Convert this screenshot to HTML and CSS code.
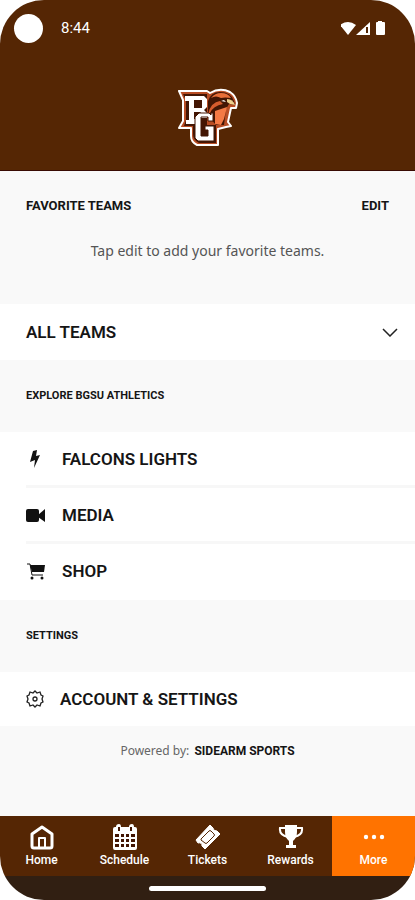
FILE: index.html
```html
<!DOCTYPE html>
<html lang="en">

<head>
   <meta charset="utf-8">
   <title>BGSU Athletics - More</title>
   <meta name="viewport" content="width=device-width, initial-scale=1">
   <link rel="stylesheet" href="styles.css">
</head>

<body>
   <div class="phone">
      <header class="header">
         <div class="status">
            <span class="camera"></span>
            <span class="clock">8:44</span>
            <svg class="signals" width="50" height="18" viewBox="0 0 50 18" fill="#fff">
               <path d="M1 5Q9 -1 17 5L9 15Z" transform="translate(-2 1)" />
               <path d="M15 16L29 3V16Z" />
               <path d="M25 8h2v6h-2z" fill="#552604" />
               <path d="M37 2h4v1h2q1 0 1 1v11q0 1-1 1h-7q-1 0-1-1V4q0-1 1-1h1z" />
            </svg>
         </div>
         <svg class="logo" viewBox="0 0 62 60">
            <path d="M2 3H30L33 5Q43 -1 53 4Q59 8 60 15L59 20L54 20L51 34L54 38L49 39L41 41V57H20Q14 54 14 48V40H2L6 33V12Z" fill="#b84d24" stroke="#fff" stroke-width="2" stroke-linejoin="round" />
            <path d="M6 6H30V37H39V55H22Q16 52 16 46V38H7L9 32V12Z" fill="#431604" />
            <path d="M31 13Q34 4 43 4Q54 4 57 13L58 17L52 16L49 21L47 37H39L31 28Z" fill="#431604" />
            <path d="M34 10Q38 5 44 5Q51 5 54 10Q48 9 44 10Q39 7 34 10Z" fill="#e86f39" />
            <path d="M31 26Q34 14 43 13L46 16Q36 18 33 25Z" fill="#d65c2d" />
            <path d="M38 23L50 19L47 31L44 37L38 36Z" fill="#f47a45" />
            <path d="M50 11Q56 11 58 17L53 16L50 14Z" fill="#efd18e" />
            <path d="M44 13L49 14L47 12Z" fill="#fff" />
            <path fill-rule="evenodd" fill="#fff" d="M8 8H27L30 11V19L27 22L30 25V30H23V36H9V32H12V13H8ZM17 12V20H25V12ZM17 24V31H21V28L24 24Z" />
            <path fill="#fff" stroke="#431604" stroke-width="1" d="M22 25H32L34 27V25H36V33H31V29H24V48H31V42H28V38H37V53H21L18 50V29Z" />
         </svg>
      </header>

      <main>
         <section class="favorites">
            <div class="favorites-head">
               <h2 class="small-title">FAVORITE TEAMS</h2>
               <button type="button" class="edit">EDIT</button>
            </div>
            <p class="hint">Tap edit to add your favorite teams.</p>
         </section>

         <button type="button" class="row all-teams">
            <span>ALL TEAMS</span>
            <svg width="16" height="10" viewBox="0 0 16 10" fill="none" stroke="#222" stroke-width="1.5">
               <path d="M1 2L8 9L15 2" />
            </svg>
         </button>

         <h2 class="section-title">EXPLORE BGSU ATHLETICS</h2>
         <ul class="links">
            <li>
               <a class="row" href="#lights">
                  <svg class="icon" viewBox="0 0 20 20" fill="#111">
                     <path d="M7 2L11 1L10 7L14 6L8 19L9 11L4 13Z" />
                  </svg>
                  FALCONS LIGHTS
               </a>
            </li>
            <li>
               <a class="row" href="#media">
                  <svg class="icon" viewBox="0 0 20 20" fill="#111">
                     <rect y="4" width="13" height="13" rx="2" />
                     <path d="M12 10L19 4V17L12 12Z" />
                  </svg>
                  MEDIA
               </a>
            </li>
            <li>
               <a class="row" href="#shop">
                  <svg class="icon" viewBox="0 0 20 20" fill="#111">
                     <path d="M4 4H19L18 11H6Z" />
                     <path d="M1 3H4L6 14H17" fill="none" stroke="#111" stroke-width="1" />
                     <circle cx="6" cy="17" r="1.5" />
                     <circle cx="16" cy="17" r="1.5" />
                  </svg>
                  SHOP
               </a>
            </li>
         </ul>

         <h2 class="section-title">SETTINGS</h2>
         <a class="row account" href="#account">
            <svg class="icon gear" viewBox="0 0 18 18" fill="none" stroke="#222" stroke-width="1.3">
               <path d="M9 1L11 3L14 2L15 5L17 6L16 9L17 12L15 13L14 16L11 15L9 17L7 15L4 16L3 13L1 12L2 9L1 6L3 5L4 2L7 3Z" />
               <circle cx="9" cy="9" r="2" />
            </svg>
            ACCOUNT &amp; SETTINGS
         </a>

         <p class="powered">Powered by: <strong>SIDEARM SPORTS</strong></p>
      </main>

      <nav class="tabs">
         <a href="#home">
            <svg viewBox="0 0 26 26" fill="none" stroke="#fff" stroke-width="3" stroke-linejoin="round">
               <path d="M3 10L13 3L23 10V22Q23 24 21 24H5Q3 24 3 22Z" />
               <path d="M10 24V14H16V24" stroke-width="2" />
            </svg>
            Home
         </a>
         <a href="#schedule">
            <svg viewBox="0 0 26 26" fill="#fff">
               <path d="M3 3H4Q4 0 7 0Q9 0 9 3H17Q17 0 20 0Q22 0 22 3H23Q25 3 25 5V24Q25 26 23 26H3Q1 26 1 24V5Q1 3 3 3Z" />
               <path d="M3 10h4v3H3zM9 10h3v3H9zM14 10h3v3h-3zM19 10h4v3h-4zM3 15h4v3H3zM9 15h3v3H9zM14 15h3v3h-3zM19 15h4v3h-4zM3 20h4v3H3zM9 20h3v3H9zM14 20h3v3h-3zM19 20h4v3h-4zM6 3h2v4H6zM18 3h2v4h-2z" fill="#431604" />
            </svg>
            Schedule
         </a>
         <a href="#tickets">
            <svg viewBox="0 0 26 26" fill="#fff">
               <path d="M1 16L15 1L18 4Q18 7 22 7L25 10L10 25L7 22Q7 18 3 19Z" stroke="#fff" stroke-linejoin="round" />
               <path d="M6 15L14 7Q15 6 16 7L19 10Q20 11 19 12L12 19Q11 20 10 19L6 16Z" fill="none" stroke="#552604" stroke-width="1" />
            </svg>
            Tickets
         </a>
         <a href="#rewards">
            <svg viewBox="0 0 26 26" fill="#fff">
               <path d="M7 1H19V8Q19 14 15 17V21H18V24H8V21H11V17Q7 14 7 8Z" />
               <path d="M8 4H2Q1 11 10 13M18 4H24Q25 11 16 13" fill="none" stroke="#fff" stroke-width="2" />
            </svg>
            Rewards
         </a>
         <a class="active" href="#more">
            <svg viewBox="0 0 26 26" fill="#fff">
               <circle cx="5" cy="13" r="2.2" />
               <circle cx="13" cy="13" r="2.2" />
               <circle cx="21" cy="13" r="2.2" />
            </svg>
            More
         </a>
      </nav>
      <div class="gesture"><span></span></div>
   </div>
</body>

</html>
```
FILE: styles.css
```css
* {
   box-sizing: border-box;
}

body {
   margin: 0;
   background: #fff;
   color: #151515;
   font-family: Roboto, sans-serif;
}

h2,
p,
ul {
   margin: 0;
   padding: 0;
}

a {
   color: inherit;
   text-decoration: none;
}

button {
   border: 0;
   padding: 0;
   background: none;
   color: inherit;
   font-family: inherit;
}

.phone {
   display: flex;
   flex-direction: column;
   min-height: 100vh;
   border-radius: 44px;
   overflow: hidden;
   background: #f9f9f9;
}

main {
   flex: 1;
}

/* header */
.header {
   display: flex;
   flex-direction: column;
   align-items: center;
   gap: 32px;
   padding-bottom: 22px;
   background: #552604;
   border-bottom: 1px solid #390b03;
}

.status {
   display: flex;
   align-items: center;
   width: 100%;
   height: 56px;
   padding: 0 24px 0 14px;
}

.camera {
   width: 29px;
   height: 29px;
   border-radius: 50%;
   background: #fff;
}

.clock {
   margin-left: 18px;
   color: #fff;
   font-size: 15px;
}

.signals {
   margin-left: auto;
}

.logo {
   display: block;
   width: 62px;
   height: 60px;
}

/* content */
.favorites {
   height: 133px;
   padding: 24px 26px;
}

.favorites-head {
   display: flex;
   justify-content: space-between;
   align-items: center;
   height: 20px;
}

.small-title,
.edit {
   font-size: 13px;
   font-weight: 700;
}

.hint {
   margin-top: 26px;
   color: #555;
   font-family: "Noto Sans", sans-serif;
   font-size: 14px;
   line-height: 20px;
   text-align: center;
}

.row {
   display: flex;
   align-items: center;
   width: 100%;
   height: 56px;
   padding: 0 17px 0 26px;
   background: #fff;
   font-size: 17px;
   font-weight: 600;
}

.all-teams {
   justify-content: space-between;
}

.section-title {
   height: 72px;
   padding-left: 26px;
   font-size: 11px;
   font-weight: 700;
   line-height: 71px;
}

.links {
   list-style: none;
   padding-left: 26px;
   background: #fff;
}

.links .row {
   padding-left: 0;
   border-bottom: 3px solid #f7f7f7;
}

.links li:last-child .row {
   border-bottom-color: #fff;
}

.icon {
   width: 20px;
   height: 20px;
   margin-right: 16px;
}

.gear {
   width: 18px;
   height: 18px;
}

.account {
   height: 54px;
}

.powered {
   padding-top: 15px;
   color: #666;
   font-family: "Noto Sans", sans-serif;
   font-size: 12px;
   line-height: 20px;
   text-align: center;
}

.powered strong {
   margin-left: 2px;
   color: #151515;
   font-family: Roboto, sans-serif;
   font-size: 12px;
}

/* bottom bar */
.tabs {
   display: grid;
   grid-template-columns: repeat(5, 1fr);
   height: 60px;
   background: #552604;
   color: #fff;
}

.tabs a {
   display: flex;
   flex-direction: column;
   align-items: center;
   gap: 2px;
   padding-top: 8px;
   font-size: 12px;
   font-weight: 500;
   line-height: 16px;
}

.tabs svg {
   width: 26px;
   height: 26px;
}

.tabs .active {
   background: #ff7300;
}

.gesture {
   display: flex;
   justify-content: center;
   align-items: center;
   height: 24px;
   background: #311f12;
}

.gesture span {
   width: 28%;
   height: 5px;
   border-radius: 3px;
   background: #fff;
}
```
